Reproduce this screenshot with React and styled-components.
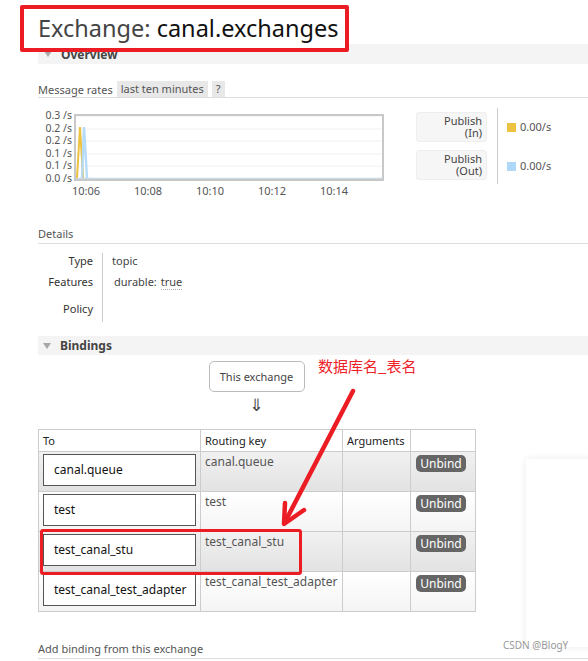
import React from 'react';
import styled, { createGlobalStyle } from 'styled-components';

const GlobalStyle = createGlobalStyle`
  html, body { margin: 0; padding: 0; background: #fff; }
`;

const Page = styled.div`
  position: relative;
  width: 588px;
  height: 661px;
  overflow: hidden;
  background: #fff;
  font-family: "Noto Sans", "DejaVu Sans", sans-serif;
  font-size: 11px;
  color: #484848;
`;

const Main = styled.div`
  padding: 5px 0 0 38px;
`;

const TitleBox = styled.h1`
  position: relative;
  z-index: 2;
  display: inline-block;
  box-sizing: border-box;
  height: 47px;
  margin: 0 0 0 -18px;
  padding: 0 7px 0 14px;
  border: 4px solid #ec1c24;
  border-radius: 2px;
  background: #fff;
  font-size: 23.5px;
  font-weight: normal;
  line-height: 39px;
  color: #444;
  white-space: nowrap;

  strong {
    font-weight: normal;
    color: #111;
  }
`;

const SectionHeader = styled.div`
  display: flex;
  align-items: center;
  gap: ${p => p.$gap || 9}px;
  height: ${p => p.$h || 20}px;
  margin-top: ${p => p.$mt || 0}px;
  padding-left: ${p => p.$pl || 6}px;
  background: #f4f4f4;
  font-size: 12px;
  font-weight: bold;
  color: #444;
`;

const Triangle = styled.span`
  width: 0;
  height: 0;
  border-left: 4px solid transparent;
  border-right: 4px solid transparent;
  border-top: 6px solid #a8a8a8;
`;

const RatesBar = styled.div`
  display: flex;
  align-items: center;
  gap: 4px;
  height: 16px;
  margin-top: 17px;
  border-bottom: 1px solid #ddd;
  color: #555;
`;

const Tag = styled.span`
  padding: 0 4px;
  line-height: 16px;
  background: #e8e8e8;
  color: #555;
`;

const ChartRow = styled.div`
  display: flex;
  align-items: flex-start;
  margin-top: 10px;
`;

const ChartBlock = styled.div`
  width: 346px;
`;

const PlotRow = styled.div`
  display: flex;
  align-items: flex-start;
  height: 73px;
`;

const YAxis = styled.div`
  width: 34px;
  padding: 1px 2px 0 0;
  text-align: right;
  font-size: 10.5px;
  line-height: 12.6px;
  color: #555;
`;

const Plot = styled.svg`
  display: block;
  margin-top: 6px;
`;

const XAxis = styled.div`
  display: flex;
  margin: 3px 0 0 17px;
  line-height: 14px;
  color: #555;
`;

const XTick = styled.span`
  width: 62px;
  text-align: center;
`;

const LegendCol = styled.div`
  display: flex;
  flex-direction: column;
  gap: 8px;
  margin: 4px 0 0 32px;
`;

const LegendBox = styled.div`
  box-sizing: border-box;
  width: 71px;
  height: 30px;
  padding: 2px 4px 0 0;
  border: 1px solid #eee;
  border-radius: 3px;
  background: #f6f6f6;
  text-align: right;
  line-height: 12px;
  color: #444;
`;

const Divider = styled.div`
  width: 1px;
  height: 76px;
  margin-left: 10px;
  background: #ccc;
`;

const ValuesCol = styled.div`
  display: flex;
  flex-direction: column;
  gap: 25px;
  padding: 12px 0 0 9px;
`;

const Rate = styled.div`
  display: flex;
  align-items: center;
  gap: 4px;
  line-height: 14px;
  color: #555;
`;

const Swatch = styled.span`
  width: 9px;
  height: 9px;
  background: ${p => p.$c};
`;

const PlainHeading = styled.div`
  margin-top: ${p => p.$mt}px;
  line-height: 16px;
  padding-bottom: 1px;
  border-bottom: 1px solid #ddd;
  color: #555;
`;

const DetailsGrid = styled.div`
  display: grid;
  grid-template-columns: 64px auto;
  grid-template-rows: 14px 28px 27px;
  margin-top: 9px;
  justify-content: start;
`;

const DLabel = styled.div`
  display: flex;
  align-items: center;
  justify-content: flex-end;
  padding-right: 9px;
  color: #333;
`;

const DValue = styled.div`
  display: flex;
  align-items: center;
  gap: 4px;
  padding-left: ${p => p.$pl || 9}px;
  border-left: 1px solid #ccc;
  color: #444;
`;

const Dotted = styled.span`
  margin-top: 2px;
  border-bottom: 1px dotted #aaa;
`;

const BindingsArea = styled.div`
  width: 437px;
`;

const Flow = styled.div`
  display: flex;
  flex-direction: column;
  align-items: center;
`;

const ExchangeNode = styled.div`
  box-sizing: border-box;
  width: 96px;
  height: 31px;
  margin-top: 6px;
  border: 1px solid #bbb;
  border-radius: 5px;
  text-align: center;
  line-height: 29px;
  color: #444;
`;

const DownArrow = styled.div`
  margin-top: 3px;
  font-family: "DejaVu Sans", sans-serif;
  font-size: 17px;
  line-height: 20px;
  color: #444;
`;

const Table = styled.table`
  width: 437px;
  margin-top: 14px;
  border-collapse: collapse;
  table-layout: fixed;

  th, td {
    border: 1px solid #ccc;
    padding: 0;
  }
`;

const Th = styled.th`
  height: 21px;
  padding-left: 4px !important;
  text-align: left;
  font-weight: normal;
  color: #222;
  background: #fff;
`;

const Tr = styled.tr`
  height: 40px;
  background: ${p => (p.$alt
    ? 'linear-gradient(#fff, #f4f4f4)'
    : 'linear-gradient(#f1f1f1, #e2e2e2)')};
`;

const ToCell = styled.td`
  vertical-align: top;
  padding: 2px 4px 0 4px !important;
`;

const QueueBox = styled.div`
  box-sizing: border-box;
  height: 32px;
  padding-left: 10px;
  border: 1px solid #555;
  background: #fff;
  font-size: 12px;
  line-height: 30px;
  color: #111;
  white-space: nowrap;
`;

const KeyCell = styled.td`
  vertical-align: top;
  padding: 2px 0 0 4px !important;
  font-size: 12px;
  line-height: 15px;
  color: #555;
  white-space: nowrap;
`;

const BtnCell = styled.td`
  vertical-align: top;
  padding: 3px 0 0 5px !important;
`;

const UnbindButton = styled.button`
  width: 50px;
  height: 17px;
  padding: 0;
  border: none;
  border-radius: 5px;
  background: #666;
  font-family: inherit;
  font-size: 12px;
  line-height: 17px;
  color: #fff;
`;

const Annotation = styled.div`
  position: absolute;
  left: 318px;
  top: 356px;
  font-family: "Noto Sans CJK SC", sans-serif;
  font-size: 15px;
  line-height: 20px;
  color: #ee2229;
`;

const Overlay = styled.svg`
  position: absolute;
  left: 0;
  top: 0;
  pointer-events: none;
`;

const HighlightBox = styled.div`
  position: absolute;
  left: 40px;
  top: 529px;
  width: 262px;
  height: 46px;
  box-sizing: border-box;
  border: 3.5px solid #ec1c24;
  border-radius: 3px;
`;

const FloatPanel = styled.div`
  position: absolute;
  left: 526px;
  top: 459px;
  width: 70px;
  height: 188px;
  background: #fff;
  box-shadow: 0 0 8px rgba(0, 0, 0, 0.08);
`;

const Watermark = styled.div`
  position: absolute;
  left: 503px;
  top: 638px;
  font-size: 10px;
  line-height: 14px;
  color: #999;
`;

const bindings = [
  { to: 'canal.queue', key: 'canal.queue' },
  { to: 'test', key: 'test' },
  { to: 'test_canal_stu', key: 'test_canal_stu' },
  { to: 'test_canal_test_adapter', key: 'test_canal_test_adapter' },
];

const yTicks = ['0.3 /s', '0.2 /s', '0.2 /s', '0.1 /s', '0.1 /s', '0.0 /s'];
const xTicks = ['10:06', '10:08', '10:10', '10:12', '10:14'];

function RatesChart() {
  return (
    <Plot width="310" height="67" viewBox="0 0 310 67">
      {[2, 15, 27, 40, 52].map(y => (
        <line key={y} x1="2" x2="308" y1={y} y2={y} stroke="#f0f0f0" strokeWidth="1" />
      ))}
      <line x1="2" x2="308" y1="64.5" y2="64.5" stroke="#c9dbe6" strokeWidth="1.5" />
      <polyline points="3,64 6,13 9,64" fill="none" stroke="#edc240" strokeWidth="2" />
      <polyline points="8,64 10,13 13,64" fill="none" stroke="#afd8f8" strokeWidth="2.5" opacity="0.9" />
      <rect x="1" y="1" width="308" height="65" fill="none" stroke="#c8c8c8" strokeWidth="2" />
    </Plot>
  );
}

export default function App() {
  return (
    <Page>
      <GlobalStyle />
      <Main>
        <TitleBox>Exchange: <strong>canal.exchanges</strong></TitleBox>
        <SectionHeader $mt={-8}><Triangle />Overview</SectionHeader>

        <RatesBar>
          Message rates <Tag>last ten minutes</Tag><Tag>?</Tag>
        </RatesBar>

        <ChartRow>
          <ChartBlock>
            <PlotRow>
              <YAxis>{yTicks.map((t, i) => <div key={i}>{t}</div>)}</YAxis>
              <RatesChart />
            </PlotRow>
            <XAxis>{xTicks.map(t => <XTick key={t}>{t}</XTick>)}</XAxis>
          </ChartBlock>
          <LegendCol>
            <LegendBox>Publish<br />(In)</LegendBox>
            <LegendBox>Publish<br />(Out)</LegendBox>
          </LegendCol>
          <Divider />
          <ValuesCol>
            <Rate><Swatch $c="#edc240" />0.00/s</Rate>
            <Rate><Swatch $c="#afd8f8" />0.00/s</Rate>
          </ValuesCol>
        </ChartRow>

        <PlainHeading $mt={28}>Details</PlainHeading>
        <DetailsGrid>
          <DLabel>Type</DLabel>
          <DValue>topic</DValue>
          <DLabel>Features</DLabel>
          <DValue $pl={11}>durable: <Dotted>true</Dotted></DValue>
          <DLabel>Policy</DLabel>
          <DValue />
        </DetailsGrid>

        <SectionHeader $mt={14} $h={19} $pl={5}><Triangle />Bindings</SectionHeader>

        <BindingsArea>
          <Flow>
            <ExchangeNode>This exchange</ExchangeNode>
            <DownArrow>⇓</DownArrow>
          </Flow>
          <Table>
            <colgroup>
              <col style={{ width: 162 }} />
              <col style={{ width: 142 }} />
              <col style={{ width: 68 }} />
              <col style={{ width: 65 }} />
            </colgroup>
            <thead>
              <tr>
                <Th>To</Th>
                <Th>Routing key</Th>
                <Th>Arguments</Th>
                <Th />
              </tr>
            </thead>
            <tbody>
              {bindings.map((b, i) => (
                <Tr key={b.to} $alt={i % 2 === 1}>
                  <ToCell><QueueBox>{b.to}</QueueBox></ToCell>
                  <KeyCell>{b.key}</KeyCell>
                  <td />
                  <BtnCell><UnbindButton>Unbind</UnbindButton></BtnCell>
                </Tr>
              ))}
            </tbody>
          </Table>
        </BindingsArea>

        <PlainHeading $mt={29}>Add binding from this exchange</PlainHeading>
      </Main>

      <FloatPanel />
      <Watermark>CSDN @BlogY</Watermark>
      <Annotation>数据库名_表名</Annotation>
      <HighlightBox />
      <Overlay width="588" height="661">
        <line x1="353" y1="391" x2="285" y2="522" stroke="#ec1c24" strokeWidth="4.5" strokeLinecap="round" />
        <polyline points="285,503 284,524 304,510" fill="none" stroke="#ec1c24" strokeWidth="4.5" strokeLinecap="round" strokeLinejoin="round" />
      </Overlay>
    </Page>
  );
}
